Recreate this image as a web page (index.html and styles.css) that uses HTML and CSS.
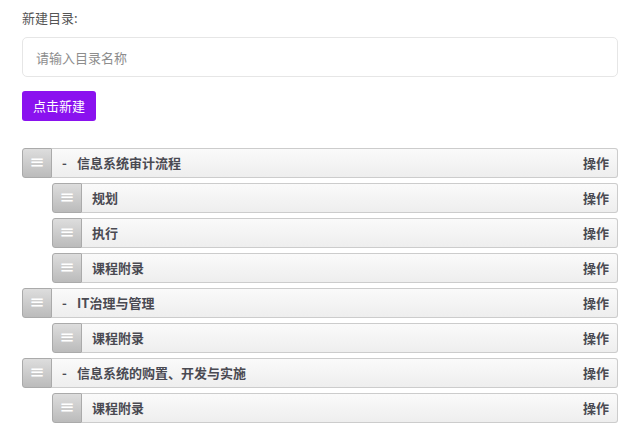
FILE: index.html
```html
<!DOCTYPE html>
<html lang="zh">
<head>
<meta charset="utf-8">
<link rel="stylesheet" href="styles.css">
</head>
<body>
<div class="page">
  <div class="label">新建目录:</div>
  <input class="name-input" type="text" placeholder="请输入目录名称">
  <button class="btn-create">点击新建</button>
  <ol class="dd-list top">
    <li class="dd-item">
      <div class="row"><div class="handle">≡</div><div class="content"><span class="dash">-</span>信息系统审计流程<span class="op">操作</span></div></div>
      <ol class="dd-list">
        <li class="dd-item"><div class="row"><div class="handle">≡</div><div class="content">规划<span class="op">操作</span></div></div></li>
        <li class="dd-item"><div class="row"><div class="handle">≡</div><div class="content">执行<span class="op">操作</span></div></div></li>
        <li class="dd-item"><div class="row"><div class="handle">≡</div><div class="content">课程附录<span class="op">操作</span></div></div></li>
      </ol>
    </li>
    <li class="dd-item">
      <div class="row"><div class="handle">≡</div><div class="content"><span class="dash">-</span>IT治理与管理<span class="op">操作</span></div></div>
      <ol class="dd-list">
        <li class="dd-item"><div class="row"><div class="handle">≡</div><div class="content">课程附录<span class="op">操作</span></div></div></li>
      </ol>
    </li>
    <li class="dd-item">
      <div class="row"><div class="handle">≡</div><div class="content"><span class="dash">-</span>信息系统的购置、开发与实施<span class="op">操作</span></div></div>
      <ol class="dd-list">
        <li class="dd-item"><div class="row"><div class="handle">≡</div><div class="content">课程附录<span class="op">操作</span></div></div></li>
      </ol>
    </li>
  </ol>
</div>
</body>
</html>
```
FILE: styles.css
```css
* { box-sizing: border-box; }
html, body { margin: 0; padding: 0; background: #fff; }
body {
  font-family: "Noto Sans CJK SC", "Noto Sans", sans-serif;
  font-size: 13px;
  color: #555;
}
.page {
  padding: 8px 23px 0 22px;
  display: flex;
  flex-direction: column;
  align-items: flex-start;
}
.label {
  line-height: 20px;
  font-size: 13px;
  color: #555;
}
.name-input {
  margin-top: 9px;
  width: 100%;
  height: 40px;
  border: 1px solid #e6e6e6;
  border-radius: 5px;
  padding: 0 13px;
  font-family: inherit;
  font-size: 13px;
  color: #333;
  outline: none;
}
.name-input::placeholder { color: #8d8d8d; }
.btn-create {
  margin-top: 14px;
  height: 30px;
  padding: 0 11px;
  border: none;
  border-radius: 3px;
  background: #8a12ef;
  color: #fff;
  font-family: inherit;
  font-size: 13px;
  line-height: 30px;
}
.dd-list {
  list-style: none;
  margin: 0;
  padding: 0;
  width: 100%;
}
.dd-list.top { margin-top: 22px; }
.dd-list .dd-list { padding-left: 30px; }
.row {
  display: flex;
  height: 30px;
  margin: 5px 0;
}
.handle {
  width: 30px;
  flex: none;
  border: 1px solid #aaa;
  border-radius: 3px 0 0 3px;
  background: linear-gradient(#dddddd, #bbbbbb);
  color: #fff;
  font-size: 18px;
  line-height: 26px;
  text-align: center;
  font-family: "DejaVu Sans", sans-serif;
}
.content {
  flex: 1;
  display: flex;
  align-items: center;
  border: 1px solid #ccc;
  border-left: none;
  border-radius: 0 3px 3px 0;
  background: linear-gradient(#fafafa, #eeeeee);
  padding: 0 8px 1px 10px;
  font-weight: bold;
  color: #4a4a52;
  font-size: 13px;
}
.dash { width: 15px; flex: none; }
.op { margin-left: auto; }
```
